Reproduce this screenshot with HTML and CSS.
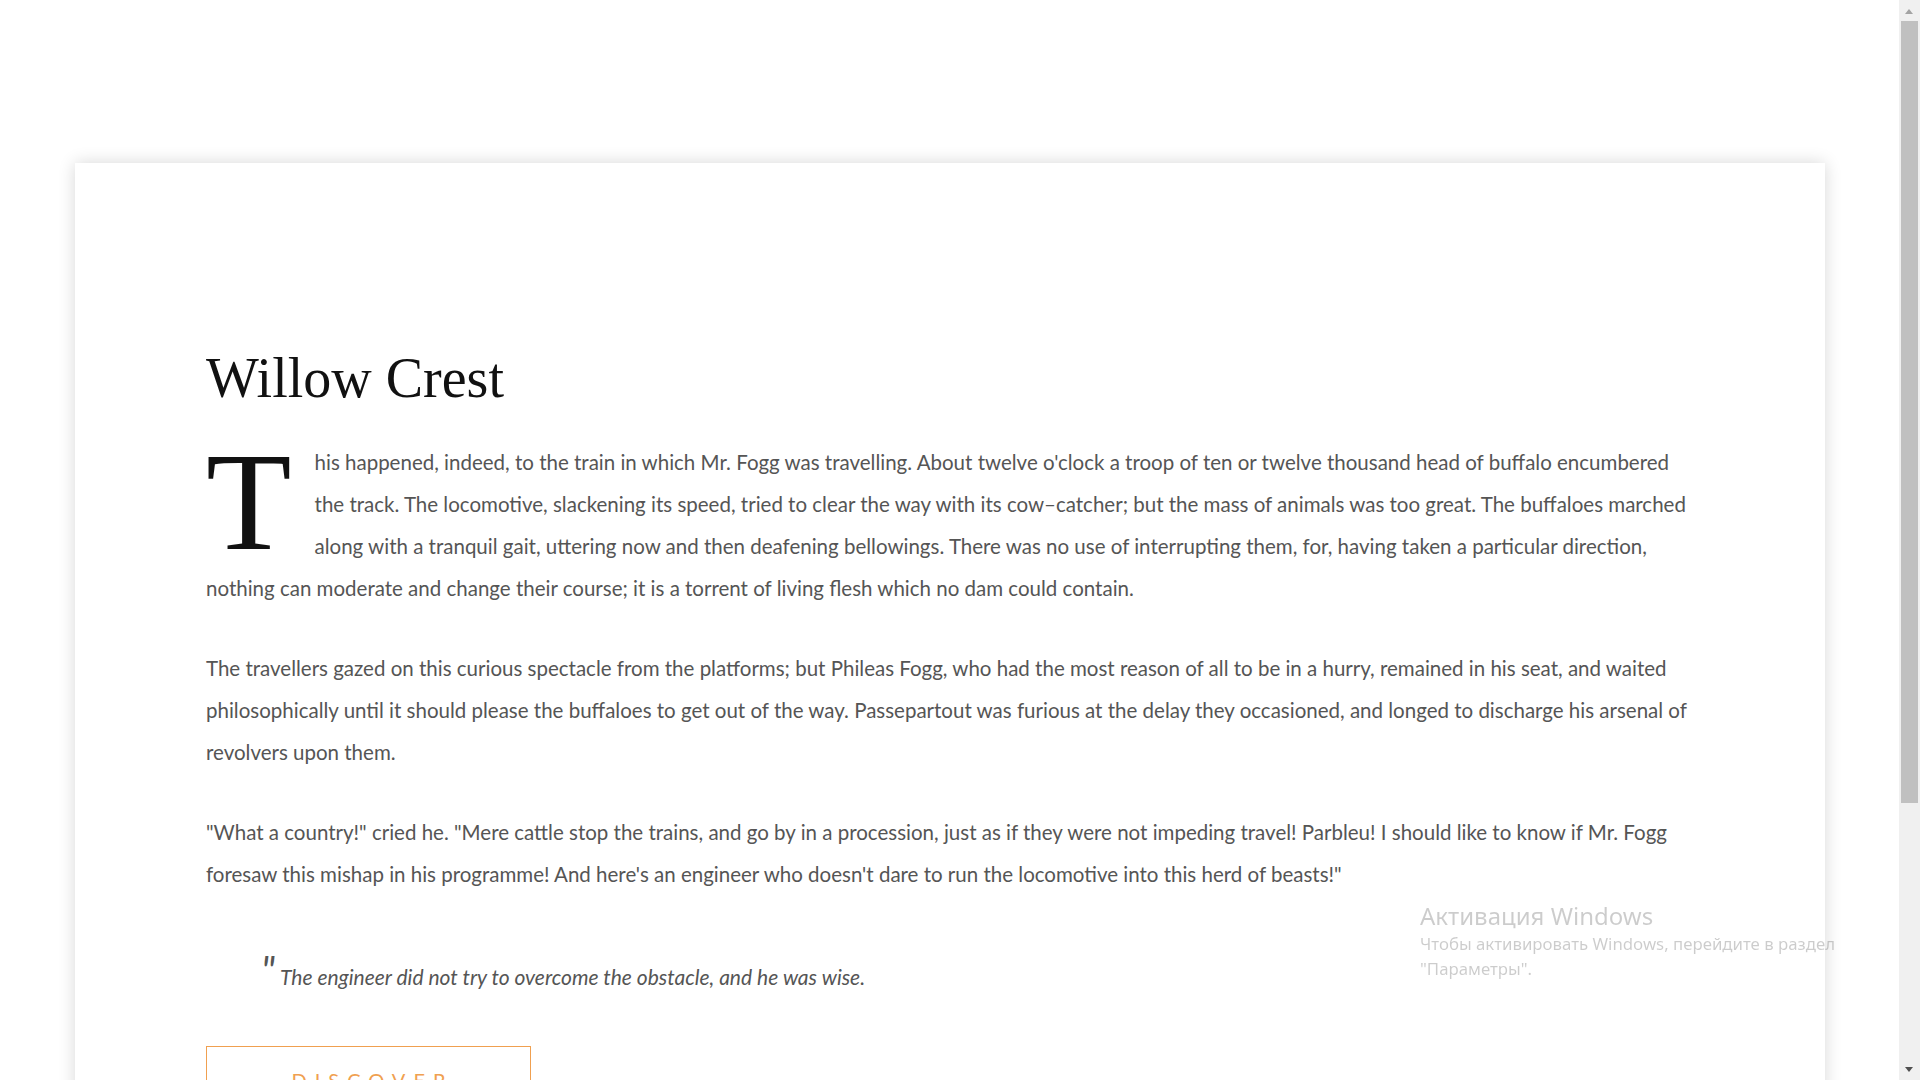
FILE: index.html
```html
<!DOCTYPE html>
<html lang="en">
<head>
<meta charset="utf-8">
<title>Willow Crest</title>
<link rel="stylesheet" href="styles.css">
</head>
<body>
<main class="page">
  <article class="card">
    <h1 class="title">Willow Crest</h1>
    <p class="para para-first"><span class="dropcap">T</span>his happened, indeed, to the train in which Mr. Fogg was travelling. About twelve o'clock a troop of ten or twelve thousand head of buffalo encumbered the track. The locomotive, slackening its speed, tried to clear the way with its cow–catcher; but the mass of animals was too great. The buffaloes marched along with a tranquil gait, uttering now and then deafening bellowings. There was no use of interrupting them, for, having taken a particular direction, nothing can moderate and change their course; it is a torrent of living flesh which no dam could contain.</p>
    <p class="para">The travellers gazed on this curious spectacle from the platforms; but Phileas Fogg, who had the most reason of all to be in a hurry, remained in his seat, and waited philosophically until it should please the buffaloes to get out of the way. Passepartout was furious at the delay they occasioned, and longed to discharge his arsenal of revolvers upon them.</p>
    <p class="para">"What a country!" cried he. "Mere cattle stop the trains, and go by in a procession, just as if they were not impeding travel! Parbleu! I should like to know if Mr. Fogg foresaw this mishap in his programme! And here's an engineer who doesn't dare to run the locomotive into this herd of beasts!"</p>
    <blockquote class="quote"><span class="quote-mark">"</span>The engineer did not try to overcome the obstacle, and he was wise.</blockquote>
    <a class="btn" href="#">Discover</a>
  </article>
</main>
<div class="activation">
  <div class="activation-title">Активация Windows</div>
  <div class="activation-text">Чтобы активировать Windows, перейдите в раздел<br>"Параметры".</div>
</div>
<div class="scrollbar" aria-hidden="true">
  <span class="sb-arrow sb-up"></span>
  <span class="sb-thumb"></span>
  <span class="sb-arrow sb-down"></span>
</div>
</body>
</html>
```

FILE: styles.css
```css
html, body {
  margin: 0;
  padding: 0;
  background: #ffffff;
}

body {
  font-family: Lato, "Open Sans", sans-serif;
  color: #555555;
}

.page {
  padding-top: 163px;
}

.card {
  margin-left: 75px;
  width: 1750px;
  box-sizing: border-box;
  padding: 182px 124px 200px 131px;
  background: #ffffff;
  box-shadow: 0 0 16px rgba(0, 0, 0, 0.16);
}

.title {
  margin: 0 0 29px;
  font-family: "Liberation Serif", "Times New Roman", serif;
  font-weight: 400;
  font-size: 56px;
  line-height: 67px;
  color: #111111;
}

.para {
  margin: 0 0 38px;
  font-size: 20.5px;
  line-height: 42px;
  color: #555555;
}

.dropcap {
  float: left;
  margin-top: 1px;
  margin-right: 23px;
  font-family: "Liberation Serif", "Times New Roman", serif;
  font-size: 140px;
  line-height: 120px;
  color: #111111;
}

.quote {
  position: relative;
  margin: 68px 0 0 74px;
  font-style: italic;
  font-size: 21px;
  line-height: 28px;
  color: #555555;
}

.quote-mark {
  position: absolute;
  left: -19px;
  top: -13px;
  font-size: 40px;
  line-height: 40px;
}

.btn {
  display: block;
  width: 325px;
  box-sizing: border-box;
  margin-top: 55px;
  padding: 21px 0 24px 8px;
  border: 1px solid #f0a050;
  text-align: center;
  text-decoration: none;
  text-transform: uppercase;
  font-size: 20px;
  line-height: 24px;
  letter-spacing: 8px;
  color: #f0a050;
}

.activation {
  position: fixed;
  left: 1420px;
  top: 900px;
  font-family: "Noto Sans", "Open Sans", sans-serif;
  color: rgba(0, 0, 0, 0.2);
  pointer-events: none;
}

.activation-title {
  font-size: 24px;
  line-height: 31px;
}

.activation-text {
  font-size: 16.8px;
  line-height: 25px;
}

.scrollbar {
  position: fixed;
  top: 0;
  right: 0;
  width: 21px;
  height: 1080px;
  background: #f0f0f0;
}

.sb-thumb {
  position: absolute;
  left: 2px;
  right: 2px;
  top: 21px;
  height: 782px;
  background: #c0c0c0;
}

.sb-arrow {
  position: absolute;
  left: 6px;
  width: 0;
  height: 0;
  border-left: 4.5px solid transparent;
  border-right: 4.5px solid transparent;
}

.sb-up {
  top: 9px;
  border-bottom: 5px solid #a3a3a3;
}

.sb-down {
  bottom: 8px;
  border-top: 5px solid #505050;
}
```
